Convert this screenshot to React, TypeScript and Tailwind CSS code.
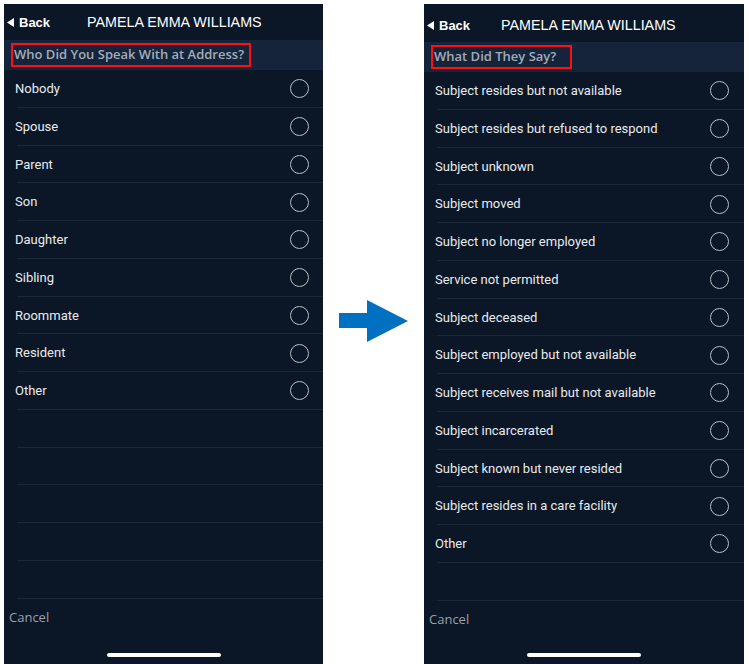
import React from "react";

const leftItems = ["Nobody", "Spouse", "Parent", "Son", "Daughter", "Sibling", "Roommate", "Resident", "Other"];
const rightItems = [
  "Subject resides but not available",
  "Subject resides but refused to respond",
  "Subject unknown",
  "Subject moved",
  "Subject no longer employed",
  "Service not permitted",
  "Subject deceased",
  "Subject employed but not available",
  "Subject receives mail but not available",
  "Subject incarcerated",
  "Subject known but never resided",
  "Subject resides in a care facility",
  "Other",
];

function Radio() {
  return <div className="w-[19px] h-[19px] rounded-full border-[1.5px] border-[#b9bec4] mr-[15px] shrink-0" />;
}

function Row({ label }: { label?: string }) {
  return (
    <div className="h-[37.75px] flex flex-col shrink-0">
      <div className="flex-1 flex items-center justify-between pl-[11px] pt-[1px]">
        <span className="text-[13px] text-[#e8ebee]" style={{ fontFamily: "Roboto, 'Liberation Sans', sans-serif" }}>
          {label}
        </span>
        {label ? <Radio /> : null}
      </div>
      <div className="h-px bg-[#1c2838] ml-[13px]" />
    </div>
  );
}

function Panel({
  question,
  boxW,
  items,
  titleMl,
  headerCls,
}: {
  question: string;
  boxW: string;
  items: string[];
  titleMl: string;
  headerCls: string;
}) {
  const rows = [...items];
  while (rows.length < 14) rows.push("");
  return (
    <div className="w-[320px] h-full bg-[#0b1626] flex flex-col">
      <div className={`${headerCls} flex items-center shrink-0 pl-[3px]`}>
        <svg width="7" height="9" viewBox="0 0 7 9" className="shrink-0">
          <polygon points="7,0 7,9 0,4.5" fill="#ffffff" />
        </svg>
        <span className="text-white text-[13px] font-bold ml-[5px]" style={{ fontFamily: "'Liberation Sans', Arial, sans-serif" }}>
          Back
        </span>
        <span
          className={`text-white text-[14.3px] ${titleMl}`}
          style={{ fontFamily: "'Liberation Sans', Arial, sans-serif" }}
        >
          PAMELA EMMA WILLIAMS
        </span>
      </div>
      <div className="h-[30px] bg-[#15243a] flex items-center shrink-0 pl-[7px]">
        <div className={`h-[24px] ${boxW} border-2 border-[#ff1010] flex items-center pl-[1px]`}>
          <span className="text-[13px] font-semibold text-[#a3adb9] whitespace-nowrap" style={{ fontFamily: "'Open Sans', Lato, sans-serif" }}>
            {question}
          </span>
        </div>
      </div>
      <div className="flex flex-col">
        {rows.map((r, i) => (
          <Row key={i} label={r || undefined} />
        ))}
      </div>
      <div className="pl-[5px] mt-[9px] text-[13px] text-[#9aa1aa] font-medium" style={{ fontFamily: "'Open Sans', Lato, sans-serif" }}>
        Cancel
      </div>
      <div className="flex-1" />
      <div className="flex justify-center pb-[7px]">
        <div className="w-[114px] h-[4px] rounded-full bg-white" />
      </div>
    </div>
  );
}

export default function App() {
  return (
    <div className="w-[749px] h-[664px] bg-white flex overflow-hidden">
      <div className="ml-[4px] mt-[4px] h-[660px] w-[319px] overflow-hidden">
        <Panel
          question="Who Did You Speak With at Address?"
          boxW="w-[240px]"
          items={leftItems}
          titleMl="ml-[37px]"
          headerCls="h-[36px] pt-[1px]"
        />
      </div>
      <div className="w-[101px] flex items-center justify-center">
        <svg width="70" height="42" viewBox="0 0 70 42" className="mt-[-22px]">
          <polygon points="0,13 28,13 28,0 69,21 28,42 28,28 0,28" fill="#0070c0" />
        </svg>
      </div>
      <div className="mt-[4px] h-[660px] w-[320px] overflow-hidden">
        <Panel
          question="What Did They Say?"
          boxW="w-[141px]"
          items={rightItems}
          titleMl="ml-[31px]"
          headerCls="h-[38px] pt-[5px]"
        />
      </div>
    </div>
  );
}
